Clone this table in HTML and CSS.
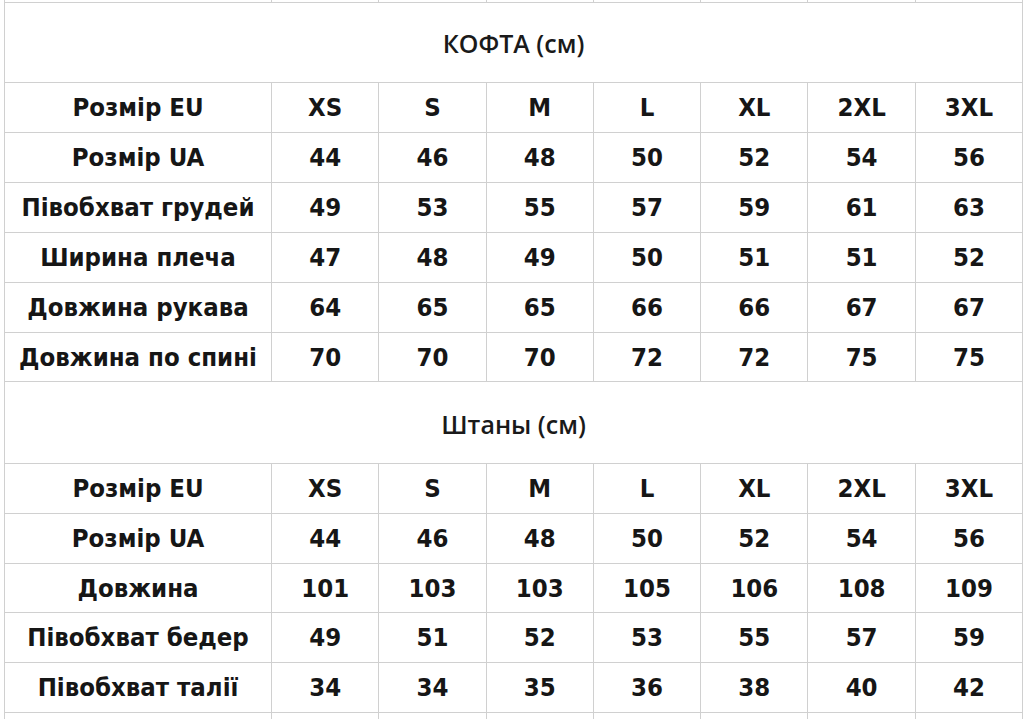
FILE: index.html
```html
<!DOCTYPE html>
<html lang="uk">
<head>
<meta charset="utf-8">
<title>Розмірна сітка</title>
<link rel="stylesheet" href="styles.css">
</head>
<body>
<table class="sizes">
  <colgroup>
    <col class="c-label">
    <col class="c-val"><col class="c-val"><col class="c-val"><col class="c-val"><col class="c-val"><col class="c-val"><col class="c-val">
  </colgroup>
  <tbody>
    <tr class="edge-top"><td></td><td></td><td></td><td></td><td></td><td></td><td></td><td></td></tr>
    <tr class="title"><td colspan="8">КОФТА (см)</td></tr>
    <tr><td>Розмір EU</td><td>XS</td><td>S</td><td>M</td><td>L</td><td>XL</td><td>2XL</td><td>3XL</td></tr>
    <tr><td>Розмір UA</td><td>44</td><td>46</td><td>48</td><td>50</td><td>52</td><td>54</td><td>56</td></tr>
    <tr><td>Півобхват грудей</td><td>49</td><td>53</td><td>55</td><td>57</td><td>59</td><td>61</td><td>63</td></tr>
    <tr><td>Ширина плеча</td><td>47</td><td>48</td><td>49</td><td>50</td><td>51</td><td>51</td><td>52</td></tr>
    <tr><td>Довжина рукава</td><td>64</td><td>65</td><td>65</td><td>66</td><td>66</td><td>67</td><td>67</td></tr>
    <tr class="short"><td>Довжина по спині</td><td>70</td><td>70</td><td>70</td><td>72</td><td>72</td><td>75</td><td>75</td></tr>
    <tr class="title title2"><td colspan="8">Штаны (см)</td></tr>
    <tr><td>Розмір EU</td><td>XS</td><td>S</td><td>M</td><td>L</td><td>XL</td><td>2XL</td><td>3XL</td></tr>
    <tr><td>Розмір UA</td><td>44</td><td>46</td><td>48</td><td>50</td><td>52</td><td>54</td><td>56</td></tr>
    <tr class="short"><td>Довжина</td><td>101</td><td>103</td><td>103</td><td>105</td><td>106</td><td>108</td><td>109</td></tr>
    <tr><td>Півобхват бедер</td><td>49</td><td>51</td><td>52</td><td>53</td><td>55</td><td>57</td><td>59</td></tr>
    <tr><td>Півобхват талії</td><td>34</td><td>34</td><td>35</td><td>36</td><td>38</td><td>40</td><td>42</td></tr>
    <tr class="edge-bottom"><td></td><td></td><td></td><td></td><td></td><td></td><td></td><td></td></tr>
  </tbody>
</table>
</body>
</html>
```
FILE: styles.css
```css
html, body {
  margin: 0;
  padding: 0;
  background: #ffffff;
  overflow: hidden;
}

body {
  width: 1024px;
  height: 719px;
}

.sizes {
  margin-left: 4px;
  border-collapse: collapse;
  table-layout: fixed;
  width: 1018px;
  color: #161616;
  font-family: "DejaVu Sans Condensed", "DejaVu Sans", sans-serif;
  font-stretch: condensed;
  font-weight: 700;
  font-size: 25.5px;
}

.c-label { width: 267px; }
.c-val { width: 107.3px; }

.sizes td {
  border: 1px solid #d0d0d0;
  height: 48px;
  padding: 1px 0 0;
  text-align: center;
  vertical-align: middle;
  line-height: 1;
  white-space: nowrap;
  overflow: hidden;
}

.sizes tr:first-child td { border-top: none; padding: 0; }

.sizes .edge-top td { height: 2px; }

.sizes .short td { height: 47px; }

.sizes .title td {
  height: 78px;
  font-family: "Open Sans", "Noto Sans", sans-serif;
  font-stretch: normal;
  font-weight: 600;
  font-size: 25px;
  color: #1a1a1a;
  padding-top: 1px;
}

.sizes .title2 td { height: 78px; padding-top: 3px; }

.sizes .edge-bottom td { height: 10px; border-bottom: none; padding: 0; }
```
